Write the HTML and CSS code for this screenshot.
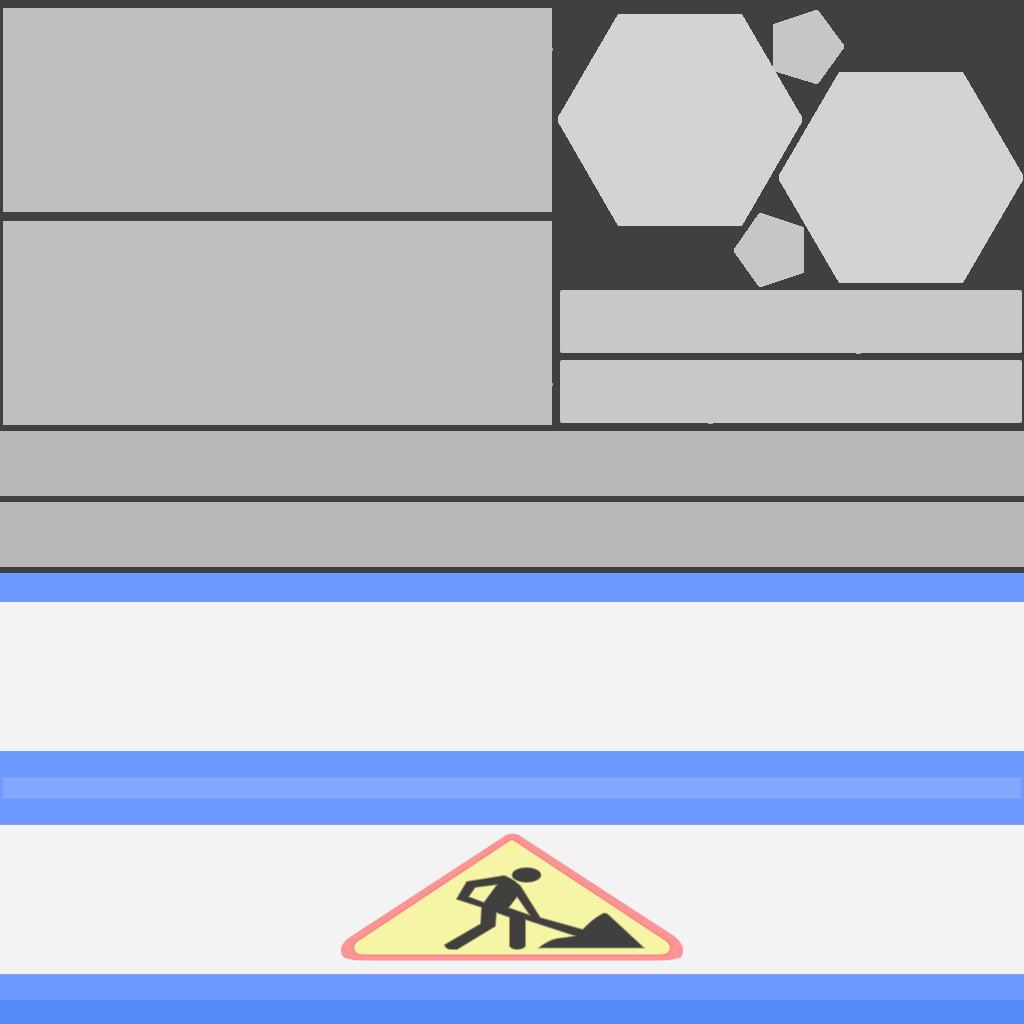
FILE: index.html
```html
<!DOCTYPE html>
<html lang="en">
<head>
<meta charset="utf-8">
<meta name="viewport" content="width=device-width, initial-scale=1">
<title>Texture sheet</title>
<link rel="stylesheet" href="styles.css">
</head>
<body>
<main class="sheet">
  <section class="parts">
    <div class="panels">
      <div class="panel panel-upper"></div>
      <div class="panel panel-lower"></div>
    </div>
    <div class="pieces">
      <svg class="caps" viewBox="560 8 462 282" shape-rendering="crispEdges" aria-hidden="true">
        <path class="pentagon" d="M773 24 816 10H818L844 45V48L818 84H816L773 71Z"/>
        <path class="pentagon" d="M804 227 761 213H759L734 249V252L759 287H761L804 273Z"/>
        <path class="hexagon" d="M618 14H742L802 117V122L742 226H618L558 122V117Z"/>
        <path class="hexagon" d="M839 72H963L1023 175V180L963 283H839L779 180V175Z"/>
      </svg>
      <div class="bar bar-upper"></div>
      <div class="bar bar-lower"></div>
    </div>
  </section>
  <section class="strips">
    <div class="strip"></div>
    <div class="strip"></div>
  </section>
  <div class="blue blue-top"></div>
  <div class="white"></div>
  <div class="blue blue-middle"><div class="highlight"></div></div>
  <div class="white white-sign">
    <svg class="sign" viewBox="340 830 344 134" role="img" aria-label="Roadworks">
      <path class="sign-rim" d="M507 834.500Q512 833 518 834.500L674 936Q683 943 683 950Q683 957 679 958Q671 960.500 660 960.500H364Q353 960.500 345 958Q341 956 341 950Q341 943 350 937Z"/>
      <path class="sign-face" d="M509 841.500Q512 839 515 841.500L667 942Q670 945 670 948Q669 954 661 954.500H362Q355 954 354 948Q354 945 357 942Z"/>
      <g class="figure">
        <ellipse cx="526.500" cy="875" rx="14" ry="7"/>
        <path fill-rule="evenodd" d="M504 876 467 882 457 899 482 907 481 924 445 945Q446 949 452 949H457L495 926 496 912 510 917V946Q512 949 517 949Q523 949 525 946V919L577 936Q567 938 557 939Q548 941 540 947.500H643L608 915Q605 912 601 915Q592 920 583 930L540 918 520 886Q513 879 504 876ZM475 887 498 884 484 903 468 897ZM517 896 531 916 508 908Z"/>
      </g>
    </svg>
  </div>
  <div class="blue blue-bottom"></div>
  <div class="base"></div>
</main>
</body>
</html>
```
FILE: styles.css
```css
* {
  box-sizing: border-box;
}

body {
  margin: 0;
  background: #568af8;
}

.sheet {
  display: flex;
  flex-direction: column;
  min-height: 100vh;
}

/* Loose parts on the dark backing */
.parts {
  display: grid;
  grid-template-columns: 549fr 462fr;
  gap: 8px;
  padding: 8px 2px 6px 3px;
  background: #404040;
}

.panels {
  display: flex;
  flex-direction: column;
  gap: 9px;
}

.panel {
  position: relative;
  flex: 1;
  background: #bfbfbf;
}

.panel::after {
  content: "";
  position: absolute;
  left: 100%;
  width: 1px;
  height: 3px;
  background: #a6a6a6;
}

.panel-upper::after {
  top: 40px;
}

.panel-lower::after {
  bottom: 39px;
}

.pieces {
  display: flex;
  flex-direction: column;
  padding-bottom: 2px;
}

.caps {
  display: block;
  width: 100%;
  overflow: visible;
}

.hexagon {
  fill: #d3d3d3;
}

.pentagon {
  fill: #c6c6c6;
}

.bar {
  position: relative;
  height: 63px;
  border-radius: 2px;
  background: #c8c8c8;
}

.bar + .bar {
  margin-top: 7px;
}

.bar::after {
  content: "";
  position: absolute;
  top: 100%;
  width: 5px;
  height: 1px;
  background: #b9b9b9;
}

.bar-upper::after {
  left: 64%;
}

.bar-lower::after {
  left: 32%;
}

.strips {
  display: grid;
  gap: 6px;
  padding-bottom: 6px;
  background: #404040;
}

.strip {
  height: 65px;
  background: #b8b8b8;
}

/* Painted bands */
.blue {
  background: #6b99ff;
}

.blue-top {
  height: 29px;
}

.blue-middle {
  padding: 26px 3px 25px;
  border-bottom: 1px solid #9c98e0;
}

.highlight {
  height: 22px;
  border: solid #79a2ff;
  border-width: 1px 0;
  background: #82a8ff;
}

.white {
  height: 149px;
  background: #f3f3f3;
}

.white-sign {
  display: flex;
  justify-content: center;
  align-items: flex-start;
  padding-top: 5px;
}

.blue-bottom {
  height: 26px;
  border-top: 1px solid #9c98e0;
}

.base {
  flex: 1;
  min-height: 24px;
  background: #568af8;
}

/* Roadworks sign */
.sign {
  display: block;
  width: 344px;
  max-width: 100%;
}

.sign-rim {
  fill: #ff9494;
}

.sign-face {
  fill: #f6f4a5;
  stroke: #ff8585;
  stroke-width: 3px;
  paint-order: stroke;
}

.figure {
  fill: #404040;
  stroke: #404028;
  stroke-opacity: 0.5;
  stroke-width: 2px;
  paint-order: stroke;
}
```
